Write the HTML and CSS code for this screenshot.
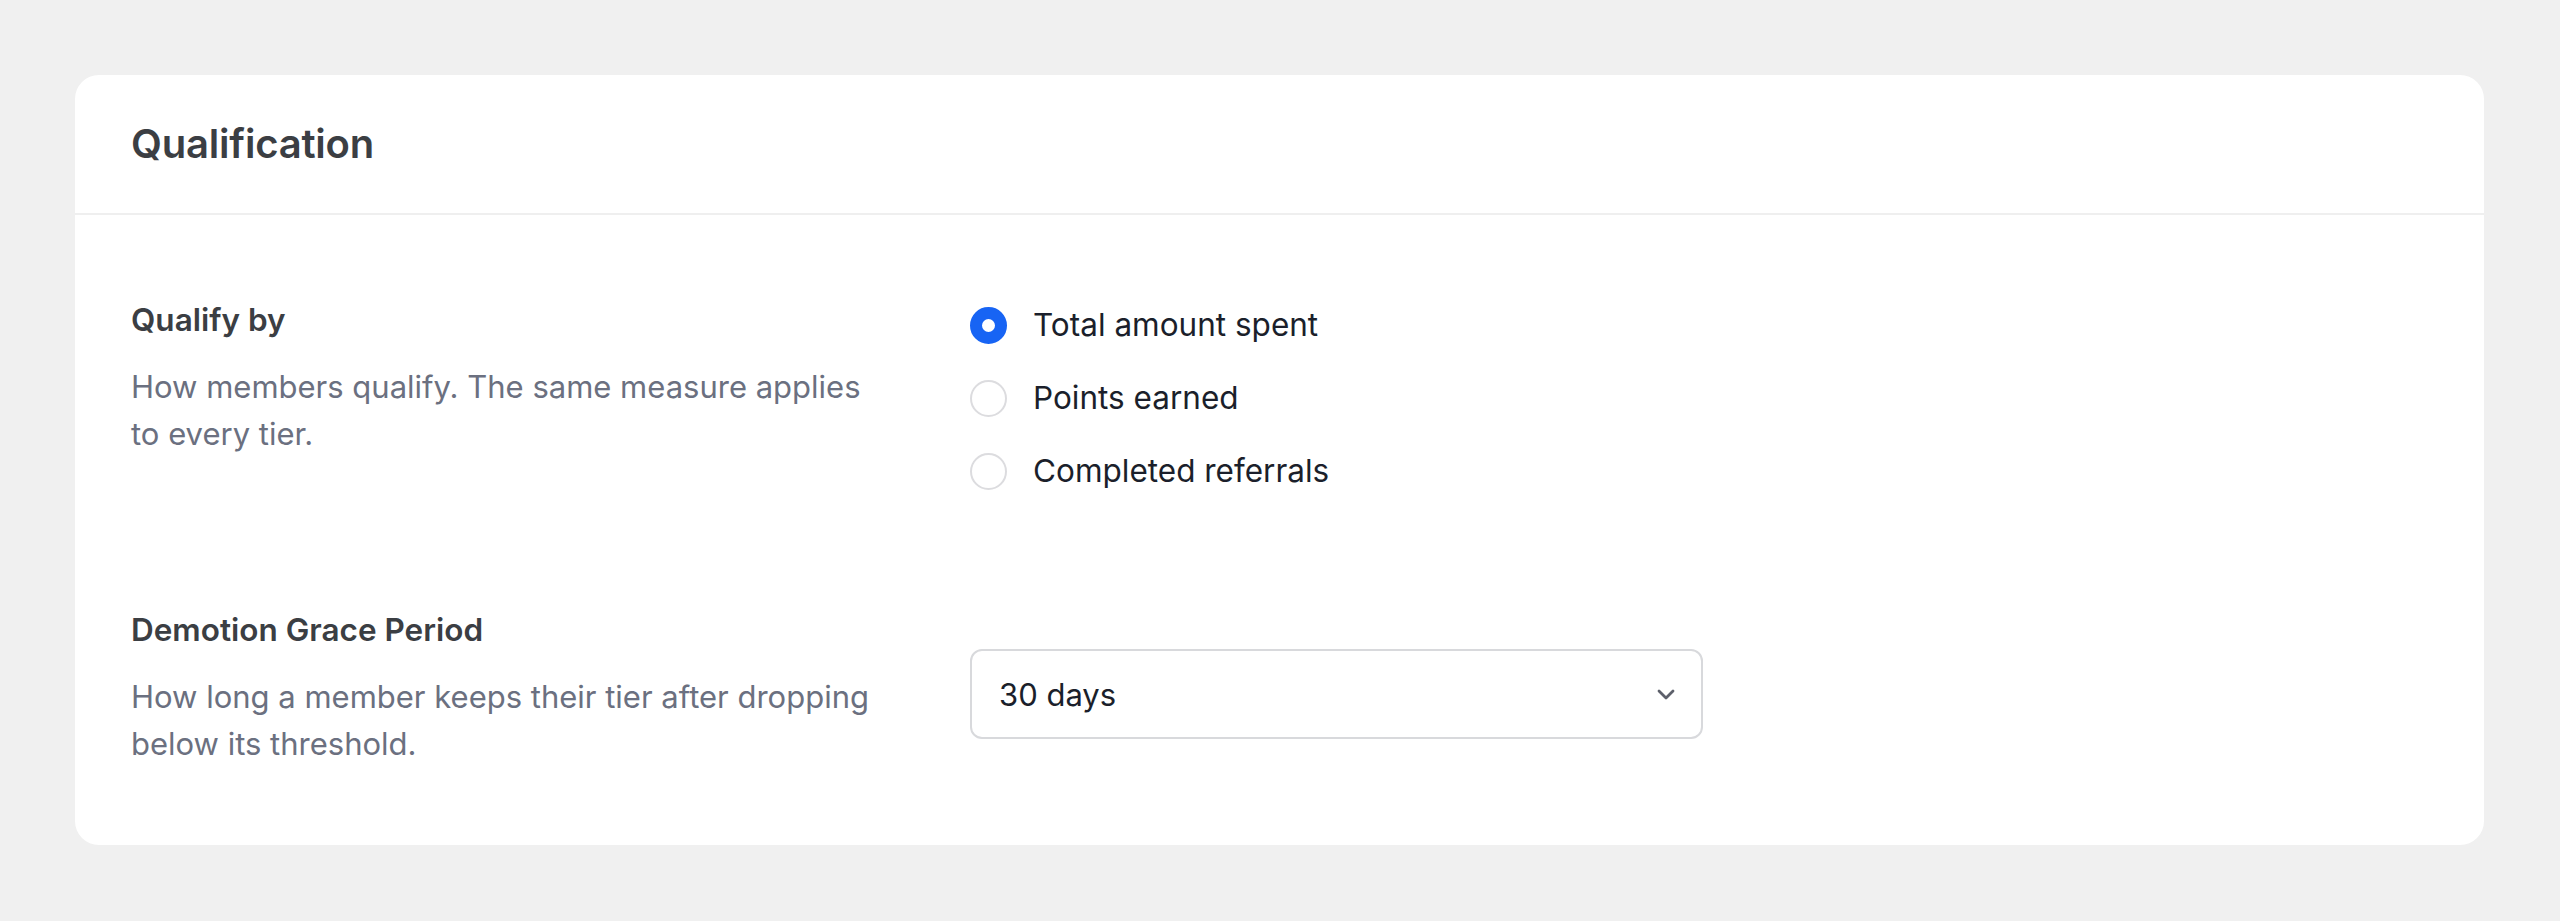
FILE: index.html
```html
<!DOCTYPE html>
<html lang="en">
<head>
  <meta charset="UTF-8">
  <title>Qualification</title>
  <link rel="stylesheet" href="styles.css">
</head>
<body>
  <div class="card">
    <div class="card-header">
      <h2>Qualification</h2>
    </div>

    <div class="card-body">
      <div class="setting">
        <div class="setting-info">
          <div class="setting-label">Qualify by</div>
          <div class="setting-desc">How members qualify. The same measure applies to every tier.</div>
        </div>
        <div class="setting-control radios">
          <label class="radio">
            <input type="radio" name="qualify" value="spent" checked>
            <span class="radio-dot"></span>
            <span>Total amount spent</span>
          </label>
          <label class="radio">
            <input type="radio" name="qualify" value="points">
            <span class="radio-dot"></span>
            <span>Points earned</span>
          </label>
          <label class="radio">
            <input type="radio" name="qualify" value="referrals">
            <span class="radio-dot"></span>
            <span>Completed referrals</span>
          </label>
        </div>
      </div>

      <div class="setting">
        <div class="setting-info">
          <div class="setting-label">Demotion Grace Period</div>
          <div class="setting-desc">How long a member keeps their tier after dropping below its threshold.</div>
        </div>
        <div class="setting-control select-wrap">
          <div class="select">
            <span>30 days</span>
            <svg class="chevron" width="18" height="11" viewBox="0 0 18 11" fill="none">
              <path d="M2 2l7 7 7-7" stroke="#5d606b" stroke-width="2.8" stroke-linecap="round" stroke-linejoin="round"/>
            </svg>
          </div>
        </div>
      </div>
    </div>
  </div>
</body>
</html>
```

FILE: styles.css
```css
body {
  font-family: Inter, "Noto Sans", sans-serif;
  background: #f0f0f0;
  margin: 0;
  padding: 75px 76px 76px 75px;
}

.card {
  background: #fff;
  border-radius: 24px;
}

.card-header {
  padding: 39px 56px;
  border-bottom: 2px solid #efefef;
}

.card-header h2 {
  margin: 0;
  font-size: 40px;
  line-height: 60px;
  font-weight: 600;
  color: #3b3e43;
  letter-spacing: -0.2px;
}

.card-body {
  padding: 81px 56px 78px;
  display: flex;
  flex-direction: column;
  gap: 111px;
}

.setting {
  display: grid;
  grid-template-columns: 760px 1fr;
  column-gap: 79px;
  align-items: start;
}

.setting-label {
  font-size: 31.5px;
  line-height: 48px;
  font-weight: 600;
  color: #3b3e43;
}

.setting-desc {
  margin-top: 19px;
  max-width: 752px;
  font-size: 31px;
  line-height: 47px;
  color: #6b7080;
}

.radios {
  display: flex;
  flex-direction: column;
  gap: 25px;
  padding-top: 5px;
}

.radio {
  display: flex;
  align-items: center;
  gap: 26px;
  font-size: 31.5px;
  line-height: 48px;
  color: #1b1f2b;
  cursor: pointer;
}

.radio input {
  display: none;
}

.radio-dot {
  width: 33px;
  height: 33px;
  border: 2px solid #dcdcdf;
  border-radius: 50%;
  flex: none;
}

.radio input:checked + .radio-dot {
  border: 12px solid #1764f4;
  width: 13px;
  height: 13px;
}

.select-wrap {
  padding-top: 43px;
}

.select {
  width: 676px;
  height: 86px;
  border: 2px solid #d8d9dc;
  border-radius: 12px;
  display: flex;
  align-items: center;
  justify-content: space-between;
  padding: 0 26px 0 27px;
  font-size: 31px;
  color: #1b1f2b;
}
```
